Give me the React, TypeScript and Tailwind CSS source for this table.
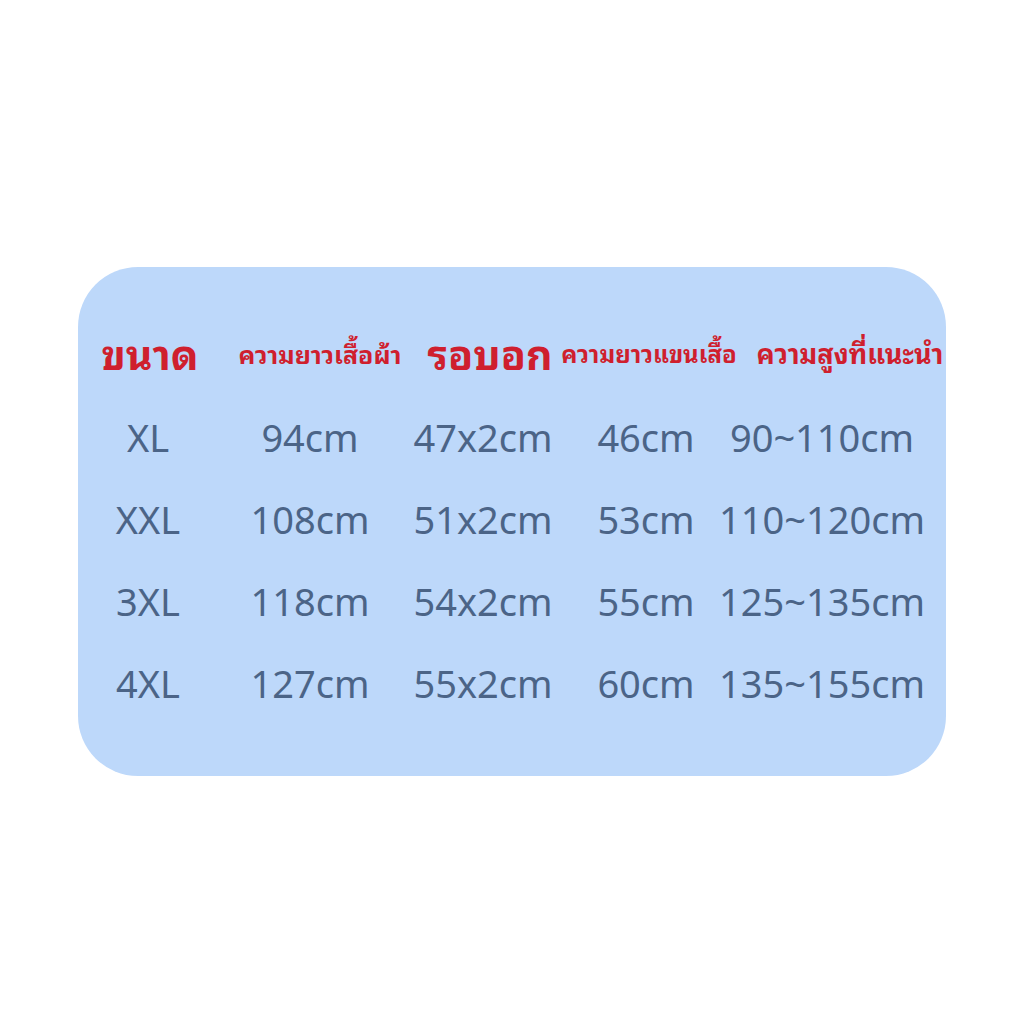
const font = { fontFamily: '"Noto Sans", "Noto Sans Thai Looped", "Noto Sans Thai", "Loma", "Garuda", "Open Sans", sans-serif' };

const rows = [
  ["XL", "94cm", "47x2cm", "46cm", "90~110cm"],
  ["XXL", "108cm", "51x2cm", "53cm", "110~120cm"],
  ["3XL", "118cm", "54x2cm", "55cm", "125~135cm"],
  ["4XL", "127cm", "55x2cm", "60cm", "135~155cm"],
];

export default function App() {
  return (
    <div className="w-[1020px] h-[1020px] bg-white relative" style={font}>
      <div className="absolute left-[78px] top-[267px] w-[868px] h-[509px] rounded-[60px] bg-[#bdd8fa]">
        <div className="grid grid-cols-[144px_196px_144px_174px_228px] mt-[63px] items-end font-bold text-[#cf1f2e] whitespace-nowrap">
          <div className="flex justify-center text-[41px] leading-[48px]">ขนาด</div>
          <div className="flex justify-center text-[25px] leading-[48px]">ความยาวเสื้อผ้า</div>
          <div className="flex justify-center text-[41px] leading-[48px]">รอบอก</div>
          <div className="flex justify-center text-[24px] leading-[48px]">ความยาวแขนเสื้อ</div>
          <div className="flex justify-center text-[27px] leading-[48px]">ความสูงที่แนะนำ</div>
        </div>
        <div className="mt-[18px] flex flex-col text-[38px] text-[#4b6487] whitespace-nowrap">
          {rows.map((r) => (
            <div key={r[0]} className="grid grid-cols-[140px_184px_162px_164px_188px] h-[82px] items-center">
              {r.map((c, i) => (
                <div key={i} className="flex justify-center">{c}</div>
              ))}
            </div>
          ))}
        </div>
      </div>
    </div>
  );
}
